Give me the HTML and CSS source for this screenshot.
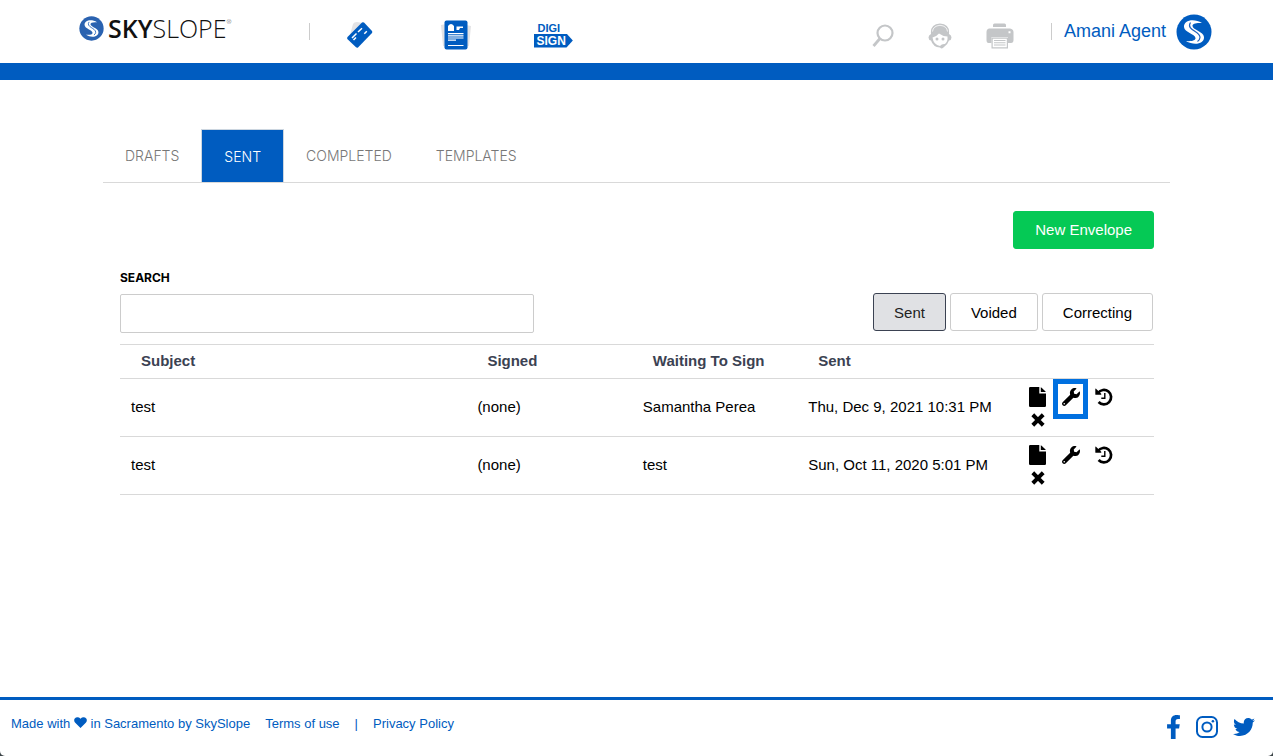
FILE: index.html
```html
<!DOCTYPE html>
<html lang="en">
<head>
  <meta charset="UTF-8">
  <meta name="viewport" content="width=device-width, initial-scale=1.0">
  <title>SkySlope DigiSign</title>
  <link rel="stylesheet" href="styles.css">
</head>
<body>
  <!-- shared icons -->
  <svg class="sprite" aria-hidden="true">
    <symbol id="swirl" viewBox="0 0 36 36">
      <circle cx="18" cy="18" r="17.500"/>
      <path fill="#fff" d="M26 9C18 4 7.500 6 8 13C8.500 18.500 19 20 19.500 24C19.800 26.500 15.500 27.500 10 27C18 32 28.500 30 28 23C27.500 17.500 17 16 16.500 12C16.200 9.500 20.500 8.500 26 9Z"/>
      <path fill="none" stroke="#1f62bc" stroke-width="1.200" d="M14.500 8.500C9.500 16 24.500 17.500 24 23.500Q23.800 26 21.500 27.500"/>
    </symbol>
    <symbol id="file" viewBox="0 0 17 20">
      <path d="M1.200 0H10.300V6.500H17V18.800Q17 20 15.800 20H1.200Q0 20 0 18.800V1.200Q0 0 1.200 0ZM11.800 0.200Q12.200 0.300 12.600 0.700L16.300 4.200Q16.700 4.600 16.800 5H11.800Z"/>
    </symbol>
    <symbol id="wrench" viewBox="0 0 512 512">
      <path d="M507.730 109.100c-2.240-9.030-13.540-12.090-20.120-5.510l-74.360 74.360-67.880-11.310-11.310-67.880 74.360-74.360c6.620-6.620 3.430-17.900-5.660-20.160-47.380-11.740-99.550.910-136.580 37.930-39.640 39.640-50.550 97.100-34.050 147.200L18.740 402.760c-24.990 24.990-24.990 65.510 0 90.500 24.990 24.990 65.510 24.990 90.500 0l213.210-213.210c50.120 16.710 107.470 5.680 147.370-34.220 37.070-37.070 49.700-89.320 37.910-136.730zM64 472c-13.250 0-24-10.750-24-24 0-13.260 10.750-24 24-24s24 10.740 24 24c0 13.250-10.750 24-24 24z"/>
    </symbol>
    <symbol id="history" viewBox="0 0 18 18">
      <path fill="none" stroke="#000" stroke-width="2.700" d="M3 5A7.200 7.200 0 1 1 3.600 14"/>
      <path d="M0.300 0.900Q0.300 0.200 1 0.700L6.200 5.800Q6.700 6.700 5.900 6.800H0.900Q0.300 6.800 0.300 6.200Z"/>
      <path fill="none" stroke="#000" stroke-width="1.400" d="M9.800 5V10.200H6.300"/>
    </symbol>
    <symbol id="times" viewBox="0 0 14 14">
      <path fill="none" stroke="#000" stroke-width="4" stroke-linecap="square" d="M3.200 3.200L10.800 10.800M10.800 3.200L3.200 10.800"/>
    </symbol>
  </svg>

  <header class="header">
    <a class="logo" href="#" aria-label="SkySlope">
      <svg class="logo-mark"><use href="#swirl"/></svg>
      <span class="logo-text"><b>SKY</b>SLOPE<sup>®</sup></span>
    </a>
    <span class="divider"></span>
    <nav class="apps">
      <a href="#" aria-label="Transactions">
        <svg width="28" height="28" viewBox="0 0 28 28">
          <path fill="#e3e3e5" d="M4 14L7 3Q8 1 11 1L17 2Z"/>
          <path fill="#005cc0" d="M16 1.500Q17 0.800 18 1.600L26 10Q26.600 11 26 12L12 26.500Q11 27 10 26.300L1.300 18Q0.800 17 1.500 16Z"/>
          <path stroke="#fff" stroke-width="1.500" fill="none" d="M6 17L10.500 12.500M12 11L16 7.300M7.500 19L10 16.500M18.300 12.800L20.800 10.300"/>
        </svg>
      </a>
      <a href="#" aria-label="Forms">
        <svg width="32" height="30" viewBox="0 0 32 30">
          <path fill="#e3e3e5" d="M1 5L6 4V27L3 26ZM31 6L26 5V27L29 26Z"/>
          <rect x="4.500" y="0.500" width="23" height="29" rx="2" fill="#005cc0"/>
          <path fill="#fff" d="M8 6Q11 2 14 6V11H8ZM16.500 6.500H23V8H20L19 10H16.500ZM8 13H23.500V14.200H8ZM8 15.200H23.500V16.400H8ZM8 17.400H23.500V18.600H8ZM8 19.600H16V20.800H8ZM8 25H23.500V26H8Z"/>
        </svg>
      </a>
      <a class="digisign" href="#">
        <span class="digi">DIGI</span>
        <span class="sign">SIGN</span>
      </a>
    </nav>
    <nav class="tools">
      <button type="button" aria-label="Search">
        <svg width="22" height="24" viewBox="0 0 22 24" fill="none" stroke="#c4c6c8">
          <circle cx="13" cy="9" r="7.500" stroke-width="2.200"/>
          <path stroke-width="2.800" d="M8 14.500L1.500 22"/>
        </svg>
      </button>
      <button type="button" aria-label="Support">
        <svg width="24" height="26" viewBox="0 0 24 26" fill="#c4c6c8">
          <path d="M3 11Q2 1 12 0.500Q22 1 21 11Q23.500 12 23.500 14.500Q23.500 17 21 17.500Q19.500 22 16 24Q14 26.500 12 24.500Q5 24 3 17.500Q0.500 17 0.500 14.500Q0.500 12 3 11Z"/>
          <path fill="#fff" d="M4.500 14.500Q8.500 13.500 11 10.500Q14 13 19.500 13.500Q20 18.500 17 21Q14 20.500 12 23Q5.500 22 4.500 14.500Z"/>
          <circle cx="9" cy="16" r="1.500"/><circle cx="15" cy="16" r="1.500"/>
          <path fill="none" stroke="#fff" stroke-width="0.800" d="M4.500 8.500Q5 3 12 2.300Q19 3 19.500 8.500"/>
        </svg>
      </button>
      <button type="button" aria-label="Print">
        <svg width="28" height="26" viewBox="0 0 28 26" fill="#c4c6c8">
          <path d="M7 4V2Q7 0.500 8.500 0.500H18.500Q20 0.500 20 2V4Z"/>
          <path fill-rule="evenodd" d="M3 5.500H24Q27.500 6 27.500 9V17Q27.500 20 25 20H22V14H5.500V20H2.500Q0.500 20 0.500 17V9Q0.500 6 3 5.500ZM22.500 8.300V10.300H24.500V8.300Z"/>
          <path fill-rule="evenodd" d="M5.500 14.500H22V25.500H5.500ZM6.700 15.700V24.300H20.800V15.700Z"/>
          <path d="M8 17H19.500V18H8ZM8 19.300H19.500V20.300H8ZM8 21.600H19.500V22.600H8Z"/>
        </svg>
      </button>
    </nav>
    <span class="divider"></span>
    <a class="user" href="#">Amani Agent <svg class="avatar"><use href="#swirl"/></svg></a>
  </header>

  <main class="container">
    <nav class="tabs">
      <a href="#">DRAFTS</a>
      <a class="active" href="#">SENT</a>
      <a href="#">COMPLETED</a>
      <a href="#">TEMPLATES</a>
    </nav>

    <div class="content">
      <div class="button-row">
        <button class="btn btn-new" type="button">New Envelope</button>
      </div>

      <div class="toolbar">
        <div class="search">
          <label for="search">SEARCH</label>
          <input type="text" id="search">
        </div>
        <div class="filters">
          <button class="btn selected" type="button">Sent</button>
          <button class="btn" type="button">Voided</button>
          <button class="btn" type="button">Correcting</button>
        </div>
      </div>

      <table class="envelopes">
        <thead>
          <tr>
            <th class="col-subject">Subject</th>
            <th class="col-signed">Signed</th>
            <th class="col-waiting">Waiting To Sign</th>
            <th class="col-sent">Sent</th>
            <th></th>
          </tr>
        </thead>
        <tbody>
          <tr>
            <td>test</td>
            <td>(none)</td>
            <td>Samantha Perea</td>
            <td>Thu, Dec 9, 2021 10:31 PM</td>
            <td>
              <div class="actions">
                <button type="button" aria-label="View"><svg class="icon-file"><use href="#file"/></svg></button>
                <button class="highlight" type="button" aria-label="Correct"><svg class="icon"><use href="#wrench"/></svg></button>
                <button type="button" aria-label="History"><svg class="icon"><use href="#history"/></svg></button>
                <button type="button" aria-label="Void"><svg class="icon-times"><use href="#times"/></svg></button>
              </div>
            </td>
          </tr>
          <tr>
            <td>test</td>
            <td>(none)</td>
            <td>test</td>
            <td>Sun, Oct 11, 2020 5:01 PM</td>
            <td>
              <div class="actions">
                <button type="button" aria-label="View"><svg class="icon-file"><use href="#file"/></svg></button>
                <button type="button" aria-label="Correct"><svg class="icon"><use href="#wrench"/></svg></button>
                <button type="button" aria-label="History"><svg class="icon"><use href="#history"/></svg></button>
                <button type="button" aria-label="Void"><svg class="icon-times"><use href="#times"/></svg></button>
              </div>
            </td>
          </tr>
        </tbody>
      </table>
    </div>
  </main>

  <footer class="footer">
    <div class="footer-links">
      <span>Made with <svg class="heart" viewBox="0 0 14 12"><path d="M7 12L1 6Q-0.500 4 0.500 1.800Q2 0 4.300 0.200Q6 0.500 7 2Q8 0.500 9.700 0.200Q12 0 13.500 1.800Q14.500 4 13 6Z"/></svg> in Sacramento by SkySlope</span>
      <a href="#">Terms of use</a>
      <span>|</span>
      <a href="#">Privacy Policy</a>
    </div>
    <div class="social">
      <a href="#" aria-label="Facebook">
        <svg width="15" height="24" viewBox="0 0 320 512"><path d="M279.140 288l14.220-92.660h-88.910v-60.130c0-25.350 12.420-50.060 52.240-50.060h40.420V6.260S260.430 0 225.360 0c-73.220 0-121.080 44.380-121.080 124.720v70.620H22.890V288h81.390v224h100.170V288z"/></svg>
      </a>
      <a href="#" aria-label="Instagram">
        <svg width="22" height="22" viewBox="0 0 22 22"><g fill="none" stroke="#005cc0" stroke-width="2"><rect x="1" y="1" width="20" height="20" rx="5.500"/><circle cx="11" cy="11" r="4.600"/></g><circle cx="16.900" cy="5.200" r="1.300"/></svg>
      </a>
      <a href="#" aria-label="Twitter">
        <svg width="22" height="22" viewBox="0 0 512 512"><path d="M459.370 151.716c.325 4.548.325 9.097.325 13.645 0 138.720-105.583 298.558-298.558 298.558-59.452 0-114.680-17.219-161.137-47.106 8.447.974 16.568 1.299 25.340 1.299 49.055 0 94.213-16.568 130.274-44.832-46.132-.975-84.792-31.188-98.112-72.772 6.498.974 12.995 1.624 19.818 1.624 9.421 0 18.843-1.300 27.614-3.573-48.081-9.747-84.143-51.980-84.143-102.985v-1.299c13.969 7.797 30.214 12.670 47.431 13.319-28.264-18.843-46.781-51.005-46.781-87.391 0-19.492 5.197-37.360 14.294-52.954 51.655 63.675 129.300 105.258 216.365 109.807-1.624-7.797-2.599-15.918-2.599-24.040 0-57.828 46.782-104.934 104.934-104.934 30.213 0 57.502 12.670 76.670 33.137 23.715-4.548 46.456-13.320 66.599-25.340-7.798 24.366-24.366 44.833-46.132 57.827 21.117-2.273 41.584-8.122 60.426-16.243-14.292 20.791-32.161 39.308-52.628 54.253z"/></svg>
      </a>
    </div>
  </footer>
</body>
</html>
```
FILE: styles.css
```css
* {
  box-sizing: border-box;
}
html {
  background: #3c4548;
}
body {
  font-family: "Liberation Sans", Arial, sans-serif;
  font-size: 15px;
  background: #fff;
  color: #000;
  margin: 0;
  min-height: 100vh;
  display: flex;
  flex-direction: column;
  border-radius: 0 0 5px 5px;
}
a {
  color: #005cc0;
  text-decoration: none;
}
button {
  font-family: inherit;
  font-size: 15px;
  cursor: pointer;
}
svg {
  display: block;
}
.sprite {
  display: none;
}

/* header */
.header {
  display: flex;
  align-items: center;
  height: 80px;
  padding: 0 61px 0 79px;
  border-bottom: 17px solid #005cc0;
}
.logo {
  display: flex;
  align-items: center;
  gap: 4px;
  margin-right: 77px;
  padding-bottom: 7px;
}
.logo-mark {
  width: 25px;
  height: 25px;
  fill: #2a62b0;
}
.logo-text {
  font-family: "Open Sans", "Noto Sans", sans-serif;
  font-size: 25px;
  line-height: 32px;
  font-weight: 300;
  color: #111;
}
.logo-text b {
  font-weight: 600;
}
.logo-text sup {
  font-size: 6px;
  line-height: 8px;
  vertical-align: 14px;
}
.divider {
  width: 1px;
  height: 17px;
  background: #ccc;
}
.apps {
  display: flex;
  align-items: center;
  padding: 6px 0 0 36px;
  gap: 66px;
}
.digisign {
  display: flex;
  flex-direction: column;
  align-items: flex-start;
  font-size: 12px;
  line-height: 12px;
  font-weight: bold;
  margin-left: -4px;
}
.digi {
  padding-left: 4px;
  font-size: 11px;
}
.sign {
  background: #005cc0;
  color: #fff;
  line-height: 14px;
  padding: 0 7px 0 3px;
  clip-path: polygon(0 0, 33px 0, 100% 50%, 33px 100%, 0 100%);
}
.tools {
  display: flex;
  align-items: center;
  gap: 34px;
  margin-left: auto;
  margin-right: 37px;
  padding-top: 8px;
}
.tools button {
  background: none;
  border: none;
  padding: 0;
}
.user {
  display: flex;
  align-items: center;
  gap: 10px;
  font-size: 18px;
  padding-left: 12px;
}
.avatar {
  width: 36px;
  height: 36px;
  fill: #005cc0;
}

/* tabs */
.container {
  flex: 1;
  padding: 49px 103px 0;
}
.tabs {
  display: flex;
  height: 54px;
  border-bottom: 1px solid #d9d9d9;
}
.tabs a {
  font-family: Inter, sans-serif;
  font-size: 14px;
  font-weight: 300;
  line-height: 53px;
  padding: 0 22px;
  color: #777;
}
.tabs .active {
  background: #005cc0;
  color: #fff;
  border: 1px solid #ccd6e0;
  border-bottom: none;
}

/* content */
.content {
  padding: 28px 16px 0 17px;
}
.button-row {
  display: flex;
  justify-content: flex-end;
}
.btn {
  height: 38px;
  padding: 0 20px;
  background: #fff;
  border: 1px solid #ccc;
  border-radius: 3px;
}
.btn-new {
  padding: 0 21px 2px;
  background: #05c955;
  border-color: #05c955;
  color: #fff;
}
.btn.selected {
  background: #e0e1e4;
  border-color: #3b4252;
  color: #222;
}
.toolbar {
  display: flex;
  justify-content: space-between;
  align-items: flex-end;
  margin: 21px 0 11px;
}
.search {
  width: 40%;
}
.search label {
  display: block;
  font-family: Inter, sans-serif;
  font-size: 12px;
  font-weight: bold;
  line-height: 16px;
  margin-bottom: 8px;
}
.search input {
  width: 100%;
  height: 39px;
  border: 1px solid #ccc;
  border-radius: 2px;
  padding: 0 10px;
  font-size: 15px;
}
.filters {
  display: flex;
  gap: 4px;
  padding: 0 1px 2px 0;
}

/* envelope table */
.envelopes {
  width: 100%;
  table-layout: fixed;
  border-collapse: collapse;
}
.envelopes tr {
  border-top: 1px solid #d9d9d9;
  border-bottom: 1px solid #d9d9d9;
}
.envelopes th {
  height: 34px;
  padding: 0 0 2px 21px;
  text-align: left;
  color: #3b4252;
}
.envelopes td {
  height: 58px;
  padding: 0 0 2px 11px;
}
.envelopes td:last-child {
  padding: 2px 0 0 7px;
}
.col-subject {
  width: 33.5%;
}
.col-signed,
.col-waiting {
  width: 16%;
}
.col-sent {
  width: 21%;
}
.actions {
  display: grid;
  grid-template-columns: repeat(3, 33px);
  grid-auto-rows: 23px;
}
.actions button {
  display: flex;
  align-items: center;
  justify-content: center;
  background: none;
  border: none;
  padding: 0;
  position: relative;
}
.highlight::after {
  content: "";
  position: absolute;
  inset: -7px -1px -10px;
  border: 5px solid #0070e0;
}
.icon {
  width: 18px;
  height: 18px;
}
.icon-file {
  width: 17px;
  height: 20px;
}
.icon-times {
  width: 14px;
  height: 14px;
}

/* footer */
.footer {
  display: flex;
  justify-content: space-between;
  height: 59px;
  border-top: 3px solid #005cc0;
  padding: 0 18px 0 11px;
  color: #005cc0;
  font-size: 13px;
}
.footer-links {
  display: flex;
  gap: 15px;
  line-height: 48px;
}
.heart {
  display: inline-block;
  width: 13px;
  height: 11px;
  fill: #005cc0;
}
.social {
  display: flex;
  align-items: center;
  gap: 15px;
  padding-top: 2px;
  height: 52px;
}
.social svg {
  fill: #005cc0;
}
```
